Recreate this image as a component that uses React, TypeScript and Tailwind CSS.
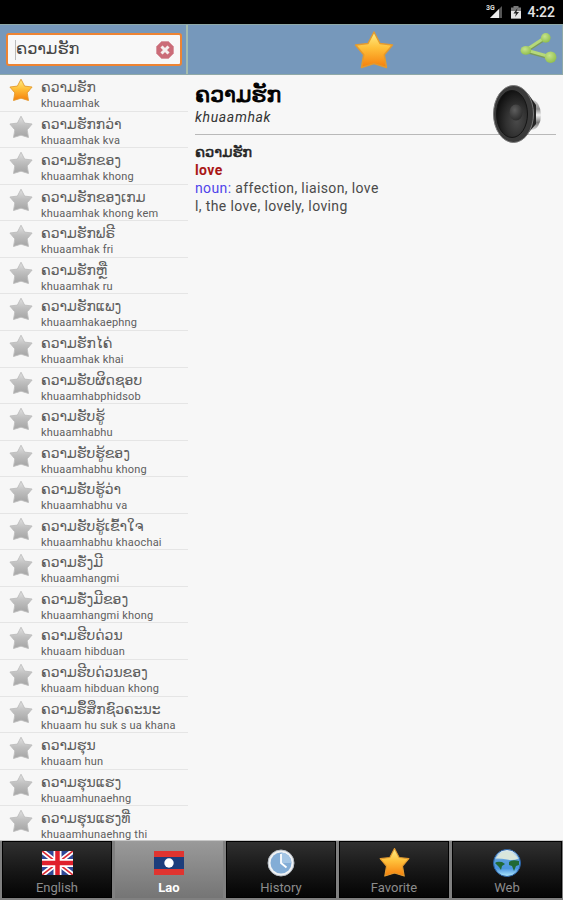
import type { ReactNode } from 'react';

const words = [
  { lao: 'ຄວາມຮັກ', latin: 'khuaamhak', starred: true },
  { lao: 'ຄວາມຮັກກວ່າ', latin: 'khuaamhak kva' },
  { lao: 'ຄວາມຮັກຂອງ', latin: 'khuaamhak khong' },
  { lao: 'ຄວາມຮັກຂອງເກມ', latin: 'khuaamhak khong kem' },
  { lao: 'ຄວາມຮັກຟຣີ', latin: 'khuaamhak fri' },
  { lao: 'ຄວາມຮັກຫຼື', latin: 'khuaamhak ru' },
  { lao: 'ຄວາມຮັກແພງ', latin: 'khuaamhakaephng' },
  { lao: 'ຄວາມຮັກໄຄ່', latin: 'khuaamhak khai' },
  { lao: 'ຄວາມຮັບຜິດຊອບ', latin: 'khuaamhabphidsob' },
  { lao: 'ຄວາມຮັບຮູ້', latin: 'khuaamhabhu' },
  { lao: 'ຄວາມຮັບຮູ້ຂອງ', latin: 'khuaamhabhu khong' },
  { lao: 'ຄວາມຮັບຮູ້ວ່າ', latin: 'khuaamhabhu va' },
  { lao: 'ຄວາມຮັບຮູ້ເຂົ້າໃຈ', latin: 'khuaamhabhu khaochai' },
  { lao: 'ຄວາມຮັ່ງມີ', latin: 'khuaamhangmi' },
  { lao: 'ຄວາມຮັ່ງມີຂອງ', latin: 'khuaamhangmi khong' },
  { lao: 'ຄວາມຮີບດ່ວນ', latin: 'khuaam hibduan' },
  { lao: 'ຄວາມຮີບດ່ວນຂອງ', latin: 'khuaam hibduan khong' },
  { lao: 'ຄວາມຮຶ້ສຶກຊົວຄະນະ', latin: 'khuaam hu suk s ua khana' },
  { lao: 'ຄວາມຮຸນ', latin: 'khuaam hun' },
  { lao: 'ຄວາມຮຸນແຮງ', latin: 'khuaamhunaehng' },
  { lao: 'ຄວາມຮຸນແຮງທີ່', latin: 'khuaamhunaehng thi' },
];

function Star({ gold, className }: { gold?: boolean; className: string }) {
  const id = gold ? 'star-gold' : 'star-grey';
  return (
    <svg viewBox="0 0 40 40" className={className}>
      <defs>
        <linearGradient id={id} x1="0" y1="0" x2="0" y2="1">
          <stop offset="0" stopColor={gold ? '#fff08a' : '#e2e2e2'} />
          <stop offset="0.45" stopColor={gold ? '#ffc03a' : '#c0c0c0'} />
          <stop offset="1" stopColor={gold ? '#f57f0c' : '#a4a4a4'} />
        </linearGradient>
      </defs>
      <path
        d="M20 2 L26 13.500 L38.500 15 L30.300 24.800 L32.500 37.500 L20 33.600 L7.500 37.500 L9.700 24.800 L1.500 15 L14 13.500 Z"
        fill={`url(#${id})`}
        stroke={gold ? '#e39a2f' : '#bdbdbd'}
        strokeWidth="1.500"
        strokeLinejoin="round"
      />
    </svg>
  );
}

function StatusBar() {
  return (
    <div className="flex h-[24px] shrink-0 items-center justify-end bg-black pr-[8px] text-[#e4e4e4]">
      <svg viewBox="0 0 18 16" className="h-[16px] w-[18px]">
        <text x="0" y="6" fontSize="7" fontWeight="700" fontFamily="Roboto, sans-serif" fill="#ddd">3G</text>
        <path d="M16 2 V14 H4 Z" fill="#555" />
        <path d="M13 5 V14 H4 Z" fill="#eee" />
      </svg>
      <svg viewBox="0 0 12 16" className="ml-[6px] h-[16px] w-[12px]">
        <path d="M3.5 2 H8.5 V3.5 H11 V14.5 H1 V3.5 H3.5 Z" fill="#777" />
        <path d="M1 7 H11 V14.5 H1 Z" fill="#e4e4e4" />
        <path d="M7.5 4 L3.5 9.5 H6 L5 13 L9 8 H6.5 Z" fill="#222" />
      </svg>
      <span className="ml-[5px] text-[14px] leading-none font-medium">4:22</span>
    </div>
  );
}

function ShareIcon() {
  return (
    <svg viewBox="0 0 38 34" className="h-[33px] w-[37px]">
      <defs>
        <radialGradient id="share" cx="0.4" cy="0.35" r="0.7">
          <stop offset="0" stopColor="#c6e48c" />
          <stop offset="1" stopColor="#8fbd4a" />
        </radialGradient>
      </defs>
      <path d="M26 6.500 L6 19.500 L31 26.500" fill="none" stroke="#7c9b58" strokeWidth="4" />
      <path d="M26 5.500 L6 18.500 L31 25.500" fill="none" stroke="#b5d97a" strokeWidth="3" />
      <circle cx="26.500" cy="6" r="5" fill="url(#share)" />
      <ellipse cx="6" cy="19" rx="5.500" ry="4.500" fill="url(#share)" />
      <circle cx="31.500" cy="26" r="6" fill="url(#share)" />
    </svg>
  );
}

function SpeakerIcon() {
  return (
    <svg viewBox="0 0 50 60" className="h-[60px] w-[50px]">
      <defs>
        <radialGradient id="cone" cx="0.65" cy="0.65" r="0.7">
          <stop offset="0" stopColor="#4a4a4a" />
          <stop offset="0.5" stopColor="#303030" />
          <stop offset="1" stopColor="#0e0e0e" />
        </radialGradient>
        <radialGradient id="cap" cx="0.4" cy="0.35" r="0.7">
          <stop offset="0" stopColor="#5e5e5e" />
          <stop offset="1" stopColor="#2a2a2a" />
        </radialGradient>
        <linearGradient id="magnet" x1="0" y1="0" x2="0" y2="1">
          <stop offset="0" stopColor="#cfcfcf" />
          <stop offset="0.3" stopColor="#8a8a8a" />
          <stop offset="0.5" stopColor="#f2f2f2" />
          <stop offset="0.75" stopColor="#777" />
          <stop offset="1" stopColor="#d8d8d8" />
        </linearGradient>
      </defs>
      <ellipse cx="40" cy="31" rx="9" ry="15" fill="url(#magnet)" />
      <path d="M26 2 L37 11 L44 21 V40 L37 48 L26 57 Z" fill="#242424" />
      <ellipse cx="21.500" cy="30" rx="20" ry="28.500" fill="#3a3a3a" stroke="#7a7a7a" strokeWidth="1" />
      <ellipse cx="20" cy="30" rx="15.500" ry="23.500" fill="url(#cone)" stroke="#161616" strokeWidth="1" />
      <ellipse cx="24" cy="28.500" rx="6.500" ry="8" fill="url(#cap)" />
    </svg>
  );
}

function UkFlag() {
  return (
    <svg viewBox="0 0 31 24" className="h-[24px] w-[31px]">
      <rect width="31" height="24" fill="#2f4796" />
      <path d="M0 0 L31 24 M31 0 L0 24" stroke="#fff" strokeWidth="5" />
      <path d="M0 0 L31 24 M31 0 L0 24" stroke="#dc2b35" strokeWidth="1.700" />
      <path d="M15.500 0 V24 M0 12 H31" stroke="#fff" strokeWidth="8" />
      <path d="M15.500 0 V24 M0 12 H31" stroke="#e0202c" strokeWidth="4.500" />
    </svg>
  );
}

function LaoFlag() {
  return (
    <svg viewBox="0 0 30 24" className="h-[24px] w-[30px]">
      <rect width="30" height="24" fill="#e03430" />
      <rect y="6" width="30" height="12" fill="#1d3d7c" />
      <circle cx="15" cy="12" r="4.700" fill="#fff" />
    </svg>
  );
}

function ClockIcon() {
  return (
    <svg viewBox="0 0 28 28" className="h-[28px] w-[28px]">
      <circle cx="14" cy="14" r="13" fill="#f0f2f4" stroke="#b5bcc4" strokeWidth="1" />
      <circle cx="14" cy="14" r="10.500" fill="#83add6" />
      <path d="M14 3.500 A10.500 10.500 0 0 1 24.500 14 L14 14 Z" fill="#a5c6e5" />
      <path d="M14 5 V14 L19.500 18.500" fill="none" stroke="#fff" strokeWidth="1.800" />
    </svg>
  );
}

function GlobeIcon() {
  return (
    <svg viewBox="0 0 30 28" className="h-[28px] w-[30px]">
      <defs>
        <linearGradient id="sea" x1="0" y1="0" x2="0" y2="1">
          <stop offset="0" stopColor="#f2f8f6" />
          <stop offset="0.4" stopColor="#5a9edc" />
          <stop offset="0.7" stopColor="#4a95e0" />
          <stop offset="1" stopColor="#b4ecfc" />
        </linearGradient>
      </defs>
      <circle cx="15" cy="14" r="13.500" fill="url(#sea)" stroke="#2861a5" strokeWidth="1" />
      <path d="M3 14 Q5 12 10 13 L13 15 L10 17 L9 21 L7 18 Z M17 13 Q20 10 27 12 L27 16 L24 17 L22 22 L20 17 L17 16 Z" fill="#216936" />
      <path d="M3.500 9.500 Q14 -5 26.500 9.500 Q21 12 15 10.500 Q8 9 3.500 9.500 Z" fill="#d9e6dc" />
    </svg>
  );
}

const tabs: { label: string; icon: ReactNode; active?: boolean }[] = [
  { label: 'English', icon: <UkFlag /> },
  { label: 'Lao', icon: <LaoFlag />, active: true },
  { label: 'History', icon: <ClockIcon /> },
  { label: 'Favorite', icon: <Star gold className="h-[31px] w-[31px]" /> },
  { label: 'Web', icon: <GlobeIcon /> },
];

export default function App() {
  return (
    <div className="flex h-[900px] w-[563px] flex-col overflow-hidden bg-[#f7f7f7] font-[Roboto,'DejaVu_Sans',sans-serif]">
      <StatusBar />

      <header className="flex h-[51px] shrink-0 border-y border-r border-[#8fa9a8] bg-[#7698bb]">
        <div className="flex w-[188px] items-center border-r-2 border-[#a5bcae] pr-[4px] pl-[6px]">
          <div className="flex h-[33px] w-full items-center rounded-[3px] border-2 border-[#ee8433] bg-[#f8f8f8] pr-[6px] pl-[7px]">
            <div className="h-[20px] w-px bg-[#bbb]" />
            <span className="flex-1 text-[16.2px] leading-none text-[#444]">ຄວາມຮັກ</span>
            <svg viewBox="0 0 18 18" className="h-[18px] w-[18px]">
              <path d="M5.500 0.500 H12.500 L17.500 5.500 V12.500 L12.500 17.500 H5.500 L0.500 12.500 V5.500 Z" fill="#cb6c78" stroke="#d99aa3" />
              <path d="M5.500 5.500 L12.500 12.500 M12.500 5.500 L5.500 12.500" stroke="#f5efef" strokeWidth="3" />
            </svg>
          </div>
        </div>
        <div className="flex flex-1 items-center justify-between pr-[5px] pl-[166px]">
          <Star gold className="h-[40px] w-[40px]" />
          <div className="mb-[3px]">
            <ShareIcon />
          </div>
        </div>
      </header>

      <div className="flex min-h-0 flex-1">
        <ul className="w-[188px] overflow-hidden">
          {words.map((word) => (
            <li key={word.latin} className="flex h-[36.57px] border-b border-[#e5e5e5] pl-[9px]">
              <Star gold={word.starred} className="mt-[3px] h-[24px] w-[24px] shrink-0" />
              <div className="ml-[8px] whitespace-nowrap text-[#5e5e5e]">
                <p className="mt-[3px] h-[18px] text-[14px] leading-[18px]">{word.lao}</p>
                <p className="text-[11px] leading-[15px] tracking-[0.2px]">{word.latin}</p>
              </div>
            </li>
          ))}
        </ul>

        <main className="flex-1 pr-[7px] pl-[7px]">
          <div className="flex h-[60px] justify-between border-b border-[#b9b9b9]">
            <div>
              <h1 className="mt-[7px] h-[26px] text-[22px] leading-[26px] text-black [-webkit-text-stroke:0.8px_black]">ຄວາມຮັກ</h1>
              <p className="text-[14px] leading-[18px] tracking-[0.65px] text-[#333] italic">khuaamhak</p>
            </div>
            <div className="mt-[9px] mr-[14px]">
              <SpeakerIcon />
            </div>
          </div>
          <div className="mt-[8px] text-[14px] leading-[18px] tracking-[0.38px] text-[#4a4a4a]">
            <p className="text-[14.6px] tracking-normal text-[#222] [-webkit-text-stroke:0.5px_#222]">ຄວາມຮັກ</p>
            <p className="font-bold text-[#a91616]">love</p>
            <p>
              <span className="text-[#4f44ea]">noun:</span> affection, liaison, love
            </p>
            <p>l, the love, lovely, loving</p>
          </div>
        </main>
      </div>

      <nav className="flex h-[60px] shrink-0 gap-[3px] border-t border-[#c8c8c8] bg-[#808080] pr-[1px] pb-[2px] pl-[2px]">
        {tabs.map((tab) => (
          <div
            key={tab.label}
            className={
              tab.active
                ? 'flex flex-1 flex-col items-center bg-linear-to-b from-[#9a9a9a] to-[#757575] text-white'
                : 'flex flex-1 flex-col items-center border border-black bg-linear-to-b from-[#303030] via-[#181818] to-[#050505] text-[#8c8c8c]'
            }
          >
            <div className={tab.active ? 'mt-[5px] flex h-[33px] items-center' : 'mt-[4px] flex h-[33px] items-center'}>{tab.icon}</div>
            <span className={tab.active ? 'text-[13px] leading-[18px] font-bold' : 'text-[13px] leading-[18px]'}>{tab.label}</span>
          </div>
        ))}
      </nav>
    </div>
  );
}
